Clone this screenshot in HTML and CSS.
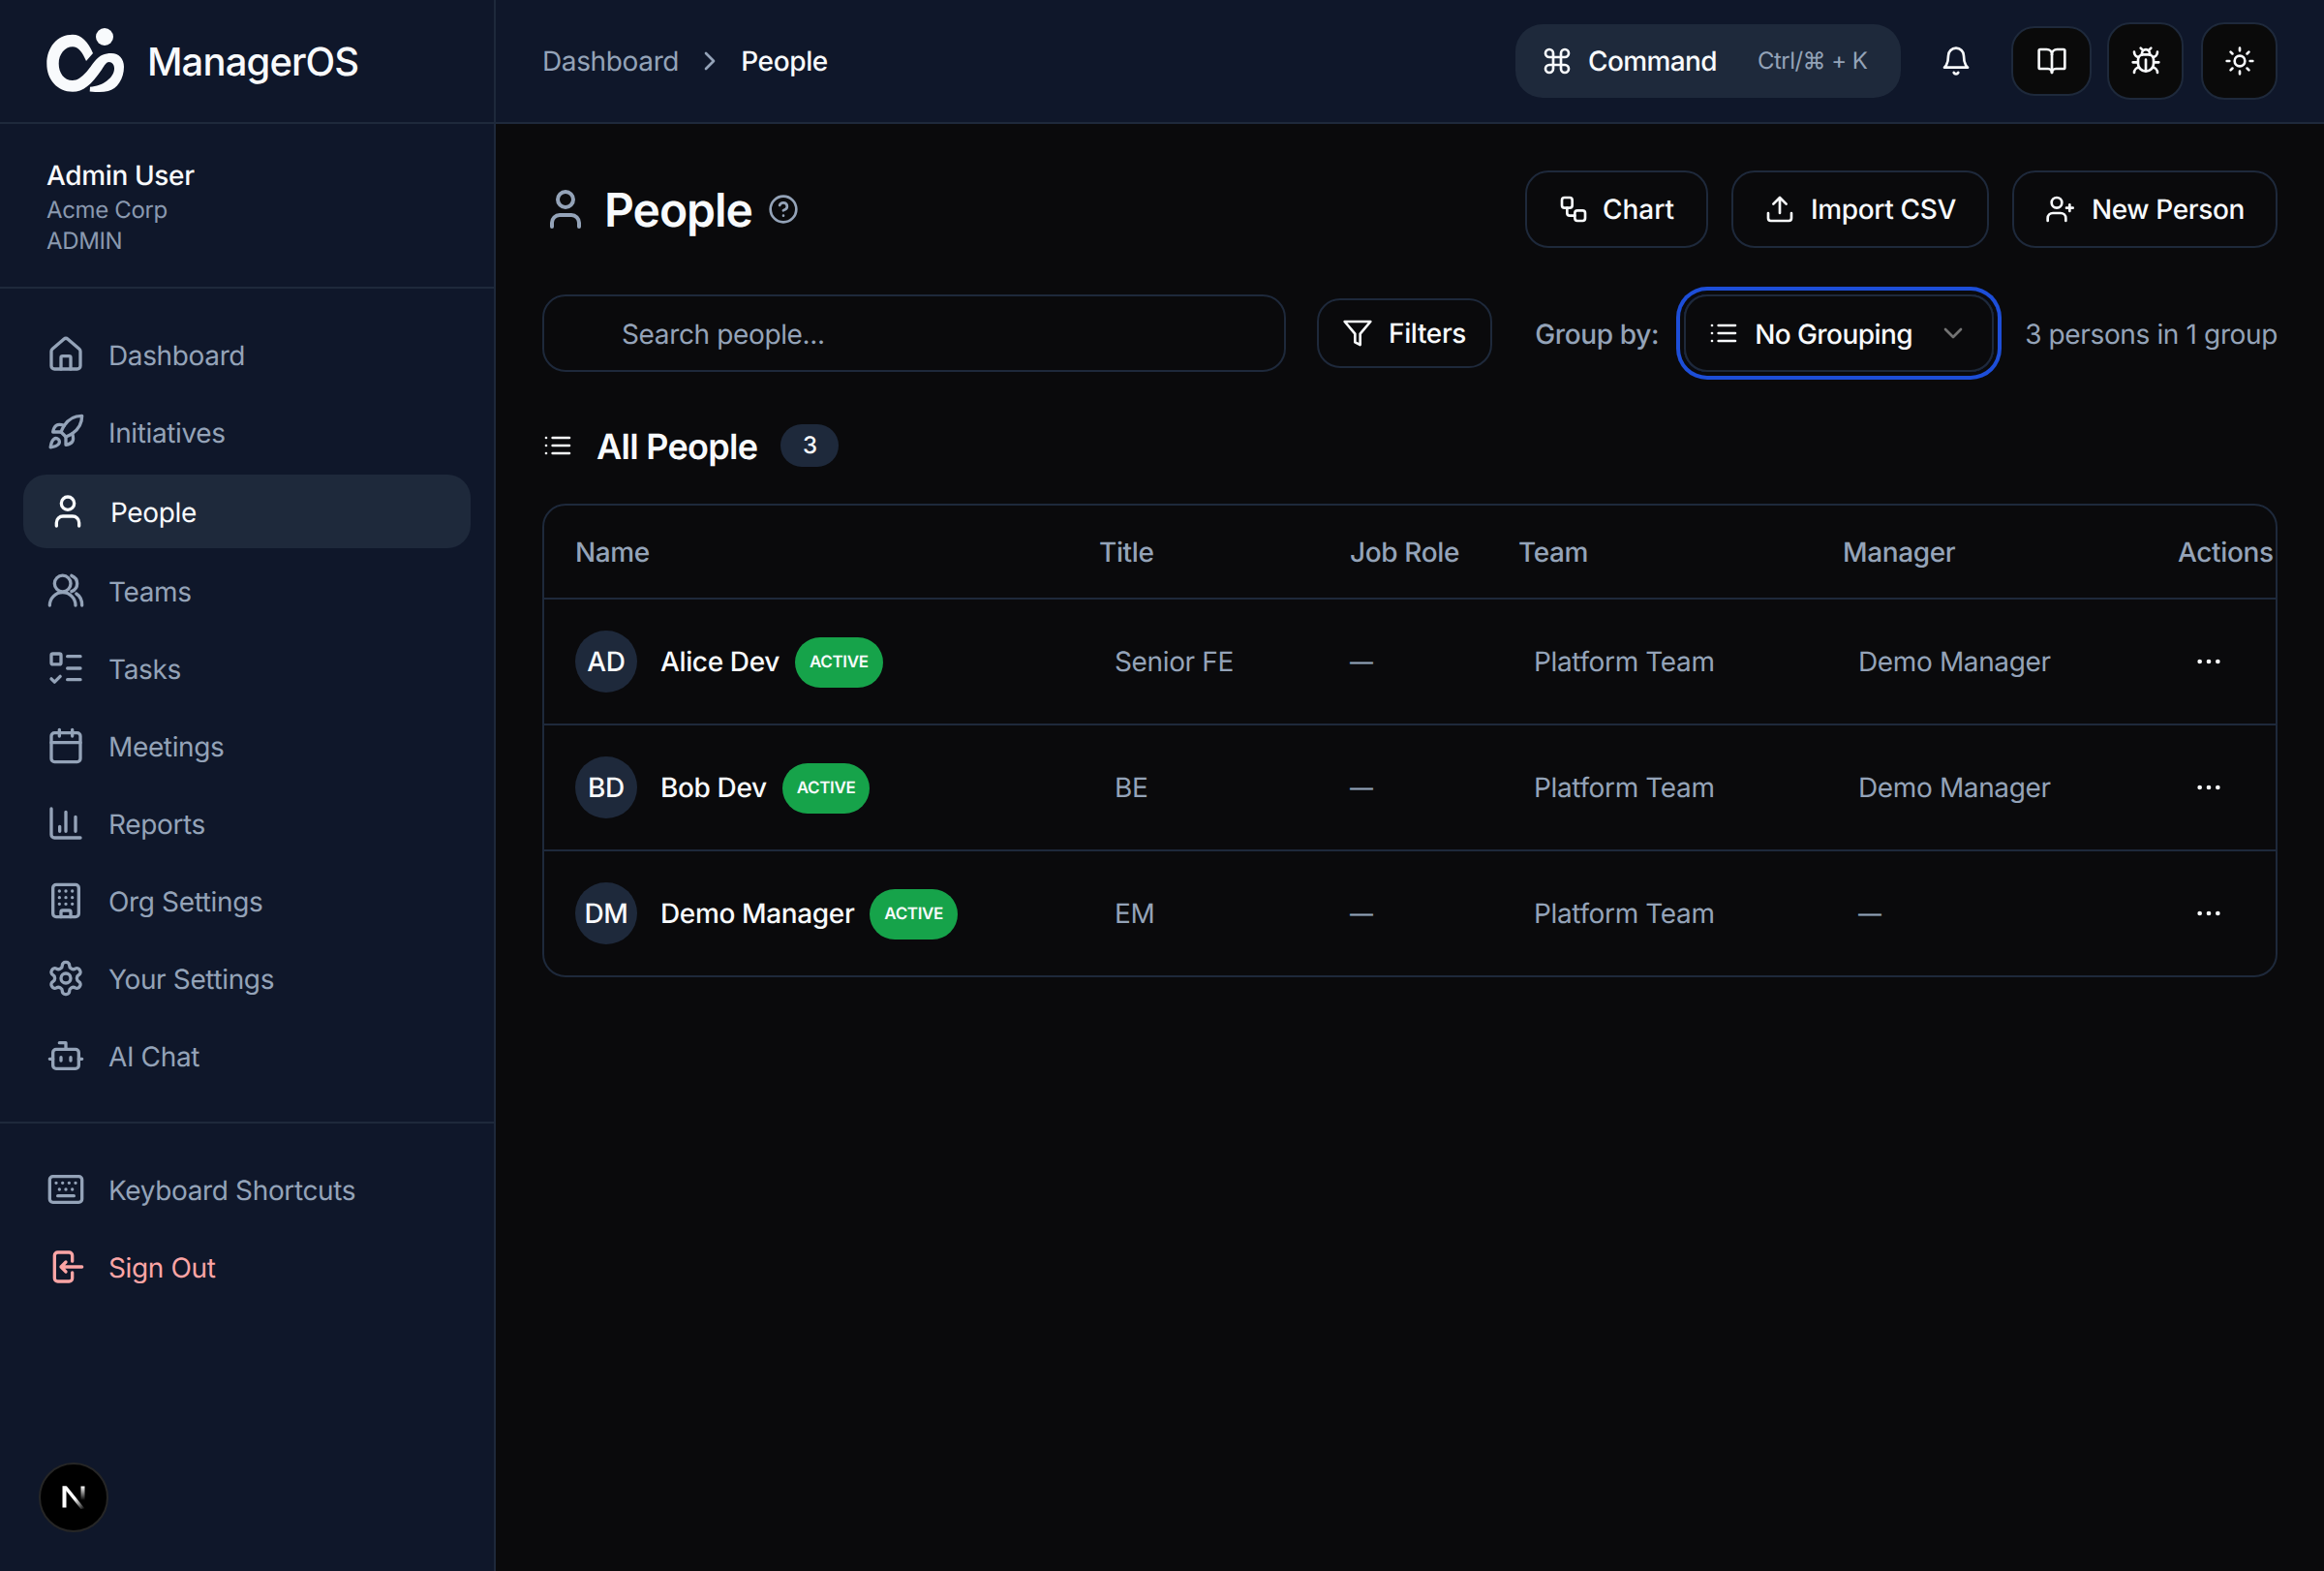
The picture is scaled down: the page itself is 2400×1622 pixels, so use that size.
FILE: index.html
```html
<!DOCTYPE html>
<html lang="en">
<head>
<meta charset="utf-8">
<title>People - ManagerOS</title>
<link rel="stylesheet" href="styles.css">
</head>
<body>
<svg class="sprite" aria-hidden="true">
  <symbol id="i-home" viewBox="0 0 24 24"><path d="M15 21v-7a1 1 0 0 0-1-1h-4a1 1 0 0 0-1 1v7"/><path d="M3 10a2 2 0 0 1 .7-1.5l7-6a2 2 0 0 1 2.6 0l7 6A2 2 0 0 1 21 10v9a2 2 0 0 1-2 2H5a2 2 0 0 1-2-2z"/></symbol>
  <symbol id="i-rocket" viewBox="0 0 24 24"><path d="M4.5 16.5c-1.5 1.26-2 5-2 5s3.74-.5 5-2c.71-.84.7-2.13-.09-2.91a2.18 2.18 0 0 0-2.91-.09z"/><path d="m12 15-3-3a22 22 0 0 1 2-3.95A12.88 12.88 0 0 1 22 2c0 2.72-.78 7.5-6 11a22.35 22.35 0 0 1-4 2z"/><path d="M9 12H4s.55-3.03 2-4c1.62-1.08 5 0 5 0"/><path d="M12 15v5s3.03-.55 4-2c1.08-1.62 0-5 0-5"/></symbol>
  <symbol id="i-user" viewBox="0 0 24 24"><path d="M19 21v-2a4 4 0 0 0-4-4H9a4 4 0 0 0-4 4v2"/><circle cx="12" cy="7" r="4"/></symbol>
  <symbol id="i-users" viewBox="0 0 24 24"><circle cx="10" cy="7.5" r="5"/><path d="M2 21c0-4.4 3.6-8 8-8s8 3.6 8 8"/><path d="M15.5 2.6c2 .8 3.5 2.7 3.5 4.9s-1.4 4.1-3.5 4.9"/><path d="M18.5 13.8c2.2 1.4 3.5 4 3.5 7.2"/></symbol>
  <symbol id="i-tasks" viewBox="0 0 24 24"><rect x="3" y="3" width="6" height="6.5" rx="1"/><path d="M13 4.6h8M13 12h8M13 19h8"/><path d="m3 18.5 2 2 3.5-3.5"/></symbol>
  <symbol id="i-calendar" viewBox="0 0 24 24"><path d="M8 2v4M16 2v4"/><rect x="3" y="4" width="18" height="18" rx="2"/><path d="M3 10h18"/></symbol>
  <symbol id="i-chart" viewBox="0 0 24 24"><path d="M3 3v16a2 2 0 0 0 2 2h16"/><path d="M8.2 17v-3M12 17V5M18 17V8"/></symbol>
  <symbol id="i-building" viewBox="0 0 24 24"><rect x="4" y="2" width="16" height="20" rx="2"/><path d="M9 22v-3a1 1 0 0 1 1-1h4a1 1 0 0 1 1 1v3"/><path d="M8 6h.01M12 6h.01M16 6h.01M8 10h.01M12 10h.01M16 10h.01M8 14h.01M12 14h.01M16 14h.01"/></symbol>
  <symbol id="i-gear" viewBox="0 0 24 24"><path d="M12.22 2h-.44a2 2 0 0 0-2 2v.18a2 2 0 0 1-1 1.73l-.43.25a2 2 0 0 1-2 0l-.15-.08a2 2 0 0 0-2.73.73l-.22.38a2 2 0 0 0 .73 2.73l.15.1a2 2 0 0 1 1 1.72v.51a2 2 0 0 1-1 1.74l-.15.09a2 2 0 0 0-.73 2.73l.22.38a2 2 0 0 0 2.73.73l.15-.08a2 2 0 0 1 2 0l.43.25a2 2 0 0 1 1 1.73V20a2 2 0 0 0 2 2h.44a2 2 0 0 0 2-2v-.18a2 2 0 0 1 1-1.73l.43-.25a2 2 0 0 1 2 0l.15.08a2 2 0 0 0 2.73-.73l.22-.39a2 2 0 0 0-.73-2.73l-.15-.08a2 2 0 0 1-1-1.74v-.5a2 2 0 0 1 1-1.74l.15-.09a2 2 0 0 0 .73-2.73l-.22-.38a2 2 0 0 0-2.73-.73l-.15.08a2 2 0 0 1-2 0l-.43-.25a2 2 0 0 1-1-1.73V4a2 2 0 0 0-2-2z"/><circle cx="12" cy="12" r="3"/></symbol>
  <symbol id="i-bot" viewBox="0 0 24 24"><path d="M12 8V4H8"/><rect x="4" y="8" width="16" height="12" rx="2"/><path d="M2 14h2M20 14h2M15 13v2M9 13v2"/></symbol>
  <symbol id="i-keyboard" viewBox="0 0 24 24"><rect x="2" y="4" width="20" height="16" rx="2"/><path d="M6 8h.01M10 8h.01M14 8h.01M18 8h.01M8 12h.01M12 12h.01M16 12h.01M7 16h10"/></symbol>
  <symbol id="i-signout" viewBox="0 0 24 24"><path d="M16 8.5V5a2 2 0 0 0-2-2H7a2 2 0 0 0-2 2v14a2 2 0 0 0 2 2h7a2 2 0 0 0 2-2v-3.5"/><path d="M22 12H9M12 9l-3 3 3 3"/></symbol>
  <symbol id="i-chev-right" viewBox="0 0 24 24"><path d="m9 18 6-6-6-6"/></symbol>
  <symbol id="i-chev-down" viewBox="0 0 24 24"><path d="m6 9 6 6 6-6"/></symbol>
  <symbol id="i-command" viewBox="0 0 24 24"><path d="M15 6v12a3 3 0 1 0 3-3H6a3 3 0 1 0 3 3V6a3 3 0 1 0-3 3h12a3 3 0 1 0-3-3"/></symbol>
  <symbol id="i-bell" viewBox="0 0 24 24"><path d="M6 8a6 6 0 0 1 12 0c0 7 3 9 3 9H3s3-2 3-9"/><path d="M10.3 21a1.94 1.94 0 0 0 3.4 0"/></symbol>
  <symbol id="i-book" viewBox="0 0 24 24"><path d="M12 7v14"/><path d="M3 18a1 1 0 0 1-1-1V4a1 1 0 0 1 1-1h5a4 4 0 0 1 4 4 4 4 0 0 1 4-4h5a1 1 0 0 1 1 1v13a1 1 0 0 1-1 1h-6a3 3 0 0 0-3 3 3 3 0 0 0-3-3z"/></symbol>
  <symbol id="i-bug" viewBox="0 0 24 24"><path d="m8 2 1.88 1.88M14.12 3.88 16 2M9 7.13v-1a3 3 0 1 1 6 0v1"/><path d="M12 20c-3.3 0-6-2.7-6-6v-3a4 4 0 0 1 4-4h4a4 4 0 0 1 4 4v3c0 3.3-2.7 6-6 6M12 20v-9M6.53 9C4.6 8.8 3 7.1 3 5M6 13H2M3 21c0-2.1 1.7-3.9 3.8-4M20.97 5c0 2.1-1.6 3.8-3.5 4M22 13h-4M17.2 17c2.1.1 3.8 1.9 3.8 4"/></symbol>
  <symbol id="i-sun" viewBox="0 0 24 24"><circle cx="12" cy="12" r="4"/><path d="M12 2v2M12 20v2M4.93 4.93l1.41 1.41M17.66 17.66l1.41 1.41M2 12h2M20 12h2M6.34 17.66l-1.41 1.41M19.07 4.93l-1.41 1.41"/></symbol>
  <symbol id="i-help" viewBox="0 0 24 24"><circle cx="12" cy="12" r="10"/><path d="M9.09 9a3 3 0 0 1 5.83 1c0 2-3 3-3 3M12 17h.01"/></symbol>
  <symbol id="i-workflow" viewBox="0 0 24 24"><rect x="3" y="3" width="8" height="8" rx="2"/><path d="M7 11v4a2 2 0 0 0 2 2h4"/><rect x="13" y="13" width="8" height="8" rx="2"/></symbol>
  <symbol id="i-upload" viewBox="0 0 24 24"><path d="M21 15v4a2 2 0 0 1-2 2H5a2 2 0 0 1-2-2v-4M17 8l-5-5-5 5M12 3v12"/></symbol>
  <symbol id="i-userplus" viewBox="0 0 24 24"><path d="M16 21v-2a4 4 0 0 0-4-4H6a4 4 0 0 0-4 4v2"/><circle cx="9" cy="7" r="4"/><path d="M19 8.500v5M21.500 11h-5"/></symbol>
  <symbol id="i-filter" viewBox="0 0 24 24"><path d="M22 3H2l8 9.46V19l4 2v-8.54z"/></symbol>
  <symbol id="i-list" viewBox="0 0 24 24"><path d="M3 12h.01M3 18h.01M3 6h.01M8 12h13M8 18h13M8 6h13"/></symbol>
  <symbol id="i-dots" viewBox="0 0 24 24"><path d="M5 12h.01M12 12h.01M19 12h.01"/></symbol>
</svg>

<div class="app">
  <aside class="sidebar">
    <div class="brand">
      <svg class="logo" viewBox="0 0 80 66">
        <path class="logo-fill" d="M48 26C43 14 36 6.700 27 6.700 11 6.700 .3 20 .3 36.700 .3 53 11 65.700 27 65.700 38 65.700 46 59 57 43 60 38 62 35 64.500 35 68 35 70 38 70 41.700 70 51 58 60 45 60.700L44.700 65.500C52 66.500 58 66 63.700 65 73 63 80 52 80 40 80 32 75 26 67 26 60 26 55 28 50 34 45 40 37 54 27 54 18 54 12.700 46 12.700 36.700 12.700 27 19 19.300 27 19.300 33 19.300 37 25 41 34Z"/>
        <circle class="logo-fill" cx="60" cy="9" r="9"/>
      </svg>
      <span class="brand-name">ManagerOS</span>
    </div>
    <div class="user-box">
      <div class="user-name">Admin User</div>
      <div class="user-meta">Acme Corp</div>
      <div class="user-meta">ADMIN</div>
    </div>
    <nav class="nav nav-main">
      <a class="nav-item"><svg class="ic ic-40"><use href="#i-home"/></svg><span>Dashboard</span></a>
      <a class="nav-item"><svg class="ic ic-40"><use href="#i-rocket"/></svg><span>Initiatives</span></a>
      <a class="nav-item is-active"><svg class="ic ic-40"><use href="#i-user"/></svg><span>People</span></a>
      <a class="nav-item"><svg class="ic ic-40"><use href="#i-users"/></svg><span>Teams</span></a>
      <a class="nav-item"><svg class="ic ic-40"><use href="#i-tasks"/></svg><span>Tasks</span></a>
      <a class="nav-item"><svg class="ic ic-40"><use href="#i-calendar"/></svg><span>Meetings</span></a>
      <a class="nav-item"><svg class="ic ic-40"><use href="#i-chart"/></svg><span>Reports</span></a>
      <a class="nav-item"><svg class="ic ic-40"><use href="#i-building"/></svg><span>Org Settings</span></a>
      <a class="nav-item"><svg class="ic ic-40"><use href="#i-gear"/></svg><span>Your Settings</span></a>
      <a class="nav-item"><svg class="ic ic-40"><use href="#i-bot"/></svg><span>AI Chat</span></a>
    </nav>
    <nav class="nav">
      <a class="nav-item"><svg class="ic ic-40"><use href="#i-keyboard"/></svg><span>Keyboard Shortcuts</span></a>
      <a class="nav-item is-danger"><svg class="ic ic-40"><use href="#i-signout"/></svg><span>Sign Out</span></a>
    </nav>
  </aside>

  <div class="main">
    <header class="topbar">
      <div class="crumbs">
        <span class="crumb">Dashboard</span>
        <svg class="ic ic-32 crumb-sep"><use href="#i-chev-right"/></svg>
        <span class="crumb-current">People</span>
      </div>
      <div class="top-actions">
        <button class="command"><svg class="ic ic-32"><use href="#i-command"/></svg><span class="command-label">Command</span><span class="command-kbd">Ctrl/⌘ + K</span></button>
        <button class="bell"><svg class="ic ic-32"><use href="#i-bell"/></svg></button>
        <button class="square square-book"><svg class="ic ic-32"><use href="#i-book"/></svg></button>
        <button class="square"><svg class="ic ic-32"><use href="#i-bug"/></svg></button>
        <button class="square"><svg class="ic ic-32"><use href="#i-sun"/></svg></button>
      </div>
    </header>

    <main class="content">
      <div class="title-row">
        <div class="title-left">
          <svg class="ic ic-48 title-icon"><use href="#i-user"/></svg>
          <h1 class="title">People</h1>
          <svg class="ic ic-32 help"><use href="#i-help"/></svg>
        </div>
        <div class="title-actions">
          <button class="btn btn-chart"><svg class="ic ic-32"><use href="#i-workflow"/></svg>Chart</button>
          <button class="btn"><svg class="ic ic-32"><use href="#i-upload"/></svg>Import CSV</button>
          <button class="btn"><svg class="ic ic-32"><use href="#i-userplus"/></svg>New Person</button>
        </div>
      </div>

      <div class="filter-row">
        <div class="filter-left">
          <input class="search" type="text" placeholder="Search people...">
          <button class="btn btn-filter"><svg class="ic ic-32"><use href="#i-filter"/></svg>Filters</button>
        </div>
        <div class="filter-right">
          <span class="group-label">Group by:</span>
          <button class="select"><svg class="ic ic-32"><use href="#i-list"/></svg><span class="select-value">No Grouping</span><svg class="ic ic-32 select-chev"><use href="#i-chev-down"/></svg></button>
          <span class="group-count">3 persons in 1 group</span>
        </div>
      </div>

      <div class="group-head">
        <svg class="ic ic-32"><use href="#i-list"/></svg>
        <h2 class="group-title">All People</h2>
        <span class="count">3</span>
      </div>

      <div class="table-wrap">
        <table class="table">
          <thead>
            <tr><th class="col-name">Name</th><th class="col-title">Title</th><th class="col-role">Job Role</th><th class="col-team">Team</th><th class="col-mgr">Manager</th><th class="col-act">Actions</th></tr>
          </thead>
          <tbody>
            <tr>
              <td><div class="person"><span class="avatar">AD</span><span class="person-name">Alice Dev</span><span class="badge">ACTIVE</span></div></td>
              <td><span class="pad">Senior FE</span></td><td><span class="dash">—</span></td><td><span class="pad">Platform Team</span></td><td><span class="pad">Demo Manager</span></td>
              <td><svg class="ic ic-32 dots"><use href="#i-dots"/></svg></td>
            </tr>
            <tr>
              <td><div class="person"><span class="avatar">BD</span><span class="person-name">Bob Dev</span><span class="badge">ACTIVE</span></div></td>
              <td><span class="pad">BE</span></td><td><span class="dash">—</span></td><td><span class="pad">Platform Team</span></td><td><span class="pad">Demo Manager</span></td>
              <td><svg class="ic ic-32 dots"><use href="#i-dots"/></svg></td>
            </tr>
            <tr>
              <td><div class="person"><span class="avatar">DM</span><span class="person-name">Demo Manager</span><span class="badge">ACTIVE</span></div></td>
              <td><span class="pad">EM</span></td><td><span class="dash">—</span></td><td><span class="pad">Platform Team</span></td><td><span class="pad dash">—</span></td>
              <td><svg class="ic ic-32 dots"><use href="#i-dots"/></svg></td>
            </tr>
          </tbody>
        </table>
      </div>
    </main>
  </div>
</div>

<div class="next-badge">
  <svg class="next-n" viewBox="0 0 24 24">
    <defs>
      <linearGradient id="n-diag" x1="0" y1="0" x2="1" y2="1"><stop offset="0.55" stop-color="#fff"/><stop offset="1" stop-color="#fff" stop-opacity="0"/></linearGradient>
      <linearGradient id="n-right" x1="0" y1="0" x2="0" y2="1"><stop offset="0" stop-color="#fff"/><stop offset="0.8" stop-color="#fff" stop-opacity="0"/></linearGradient>
    </defs>
    <rect x="0.500" y="0.500" width="4" height="22" fill="#fff"/>
    <polygon points="0.500,0.500 5,0.500 23.500,23.500 19.500,24" fill="url(#n-diag)"/>
    <rect x="19.500" y="0.500" width="4" height="18" fill="url(#n-right)"/>
  </svg>
</div>
</body>
</html>
```

FILE: styles.css
```css
* { box-sizing: border-box; }
html, body { margin: 0; height: 100%; }
body {
  background: #0a0a0c;
  color: #f8fafc;
  font-family: "Inter", "Liberation Sans", sans-serif;
  font-size: 28px;
  line-height: 40px;
  letter-spacing: -0.013em;
  overflow: hidden;
  text-rendering: geometricPrecision;
}
button, input { font: inherit; color: inherit; letter-spacing: inherit; text-rendering: inherit; }
.sprite { display: none; }
.ic {
  flex: none;
  display: block;
  fill: none;
  stroke: currentColor;
  stroke-width: 2;
  stroke-linecap: round;
  stroke-linejoin: round;
}
.ic-32 { width: 32px; height: 32px; }
.ic-40 { width: 40px; height: 40px; }
.ic-48 { width: 48px; height: 48px; }

.app { display: flex; height: 1622px; }

/* sidebar */
.sidebar {
  width: 512px;
  flex: none;
  background: #0f172a;
  border-right: 2px solid #1e293b;
}
.brand {
  height: 128px;
  display: flex;
  align-items: center;
  gap: 24px;
  padding: 0 48px;
  border-bottom: 2px solid #1e293b;
}
.logo { width: 80px; height: 66px; flex: none; margin-top: -2px; }
.logo-fill { fill: #f8fafc; }
.brand-name { font-size: 40px; font-weight: 500; line-height: 48px; letter-spacing: -0.022em; padding-top: 2px; }
.user-box {
  padding: 33px 48px 0;
  height: 170px;
  border-bottom: 2px solid #1e293b;
}
.user-name { font-weight: 500; line-height: 40px; }
.user-meta { font-size: 24px; line-height: 32px; color: #8a99af; }
.nav {
  display: flex;
  flex-direction: column;
  gap: 8px;
  padding: 32px 24px;
}
.nav-main { border-bottom: 2px solid #1e293b; }
.nav-item {
  display: flex;
  align-items: center;
  gap: 24px;
  height: 72px;
  padding: 0 24px;
  color: #94a3b8;
  border-radius: 24px;
}
.nav-item span { padding-top: 2px; }
.nav-item.is-active {
  height: 76px;
  padding: 0 26px;
  background: #1e293b;
  color: #f8fafc;
}
.nav-item.is-danger { color: #fca5a5; }

/* top bar */
.main { flex: 1; min-width: 0; display: flex; flex-direction: column; }
.topbar {
  height: 128px;
  flex: none;
  display: flex;
  align-items: center;
  justify-content: space-between;
  padding: 0 48px;
  background: #0f172a;
  border-bottom: 2px solid #1e293b;
}
.crumbs { display: flex; align-items: center; gap: 16px; }
.crumb { color: #94a3b8; }
.crumb-sep { color: #94a3b8; }
.crumb-current { font-weight: 500; color: #f8fafc; }
.top-actions { display: flex; align-items: center; }
.command {
  display: flex;
  align-items: center;
  height: 76px;
  width: 398px;
  padding: 0 24px 0 27px;
  border: 0;
  border-radius: 28px;
  background: #1e293b;
  color: #f8fafc;
}
.command-label { margin-left: 16px; font-weight: 450; letter-spacing: -0.022em; }
.command-kbd { margin-left: 42px; font-size: 24px; letter-spacing: -0.022em; color: #94a3b8; }
.bell {
  width: 48px;
  height: 48px;
  margin-left: 33px;
  margin-right: 33px;
  padding: 8px;
  border: 0;
  background: none;
  color: #f8fafc;
}
.square {
  width: 79px;
  height: 80px;
  margin-left: 18px;
  display: flex;
  align-items: center;
  justify-content: center;
  padding: 0;
  border: 2px solid #1e293b;
  border-radius: 24px;
  background: #0a0a0a;
  color: #f8fafc;
}
.square-book { width: 83px; height: 72px; margin-left: 0; }
.square-book + .square { margin-left: 16px; }

/* content */
.content { flex: 1; padding: 48px; }
.title-row { display: flex; justify-content: space-between; align-items: center; height: 80px; }
.title-left { display: flex; align-items: center; gap: 16px; }
.title-icon { color: #94a3b8; }
.title { margin: 0; padding-top: 2px; font-size: 48px; line-height: 64px; font-weight: 600; letter-spacing: -0.022em; }
.help { color: #94a3b8; }
.title-actions { display: flex; gap: 24px; }
.btn {
  display: flex;
  align-items: center;
  gap: 16px;
  height: 80px;
  padding: 0 32px;
  border: 2px solid #1e293b;
  border-radius: 24px;
  background: none;
  color: #f8fafc;
  font-weight: 450;
}
.btn-chart { padding: 0 33px 0 32px; gap: 14px; letter-spacing: 0; }
.filter-row {
  display: flex;
  align-items: center;
  justify-content: space-between;
  margin-top: 48px;
  height: 80px;
}
.filter-left { display: flex; align-items: center; gap: 32px; }
.search {
  width: 768px;
  height: 80px;
  padding: 2px 80px 0;
  border: 2px solid #1e293b;
  border-radius: 24px;
  background: none;
  outline: none;
}
.search::placeholder { color: #94a3b8; opacity: 1; }
.btn-filter { height: 72px; padding: 0 25px 0 24px; }
.filter-right { display: flex; align-items: center; }
.group-label { color: #94a3b8; font-weight: 450; margin-right: 26px; padding-top: 2px; }
.select {
  display: flex;
  align-items: center;
  width: 320px;
  height: 80px;
  padding: 0 24px 0 23px;
  border: 2px solid #1e293b;
  border-radius: 24px;
  background: none;
  color: #f8fafc;
  box-shadow: 0 0 0 4px #0a0a0c, 0 0 0 8px #1d4ed8;
}
.select-value { margin-left: 16px; font-weight: 450; letter-spacing: -0.02em; white-space: nowrap; padding-top: 2px; }
.select-chev { margin-left: auto; color: #737373; }
.group-count { margin-left: 32px; color: #94a3b8; padding-top: 2px; }

.group-head {
  display: flex;
  align-items: center;
  height: 44px;
  margin-top: 54px;
  gap: 24px;
}
.group-title { margin: 0; padding-top: 2px; font-size: 36px; line-height: 44px; font-weight: 600; letter-spacing: -0.02em; }
.count {
  display: flex;
  align-items: center;
  justify-content: center;
  width: 60px;
  height: 44px;
  border-radius: 22px;
  background: #1e293b;
  font-size: 24px;
  font-weight: 500;
}

.table-wrap {
  margin-top: 38px;
  border: 2px solid #1e293b;
  border-radius: 24px;
}
.table {
  width: 100%;
  table-layout: fixed;
  border-collapse: separate;
  border-spacing: 0;
}
.table th, .table td {
  padding: 0 32px;
  border-bottom: 2px solid #1e293b;
  text-align: left;
  white-space: nowrap;
}
.table th { height: 97px; font-weight: 450; color: #94a3b8; }
.table td { height: 130px; color: #94a3b8; }
.table tbody tr:last-child td { height: 128px; border-bottom: 0; }
.col-name { width: 541px; }
.col-title { width: 259px; }
.col-role { width: 174px; }
.col-team { width: 335px; }
.col-mgr { width: 346px; }
.col-act { width: 133px; }
.pad { padding-left: 16px; }
.dash { font-size: 24px; }
.person { display: flex; align-items: center; }
.avatar {
  display: flex;
  align-items: center;
  justify-content: center;
  width: 64px;
  height: 64px;
  flex: none;
  border-radius: 50%;
  background: #1e293b;
  color: #f8fafc;
  font-weight: 450;
}
.person-name { margin-left: 24px; color: #f8fafc; font-weight: 450; }
.badge {
  display: flex;
  align-items: center;
  height: 52px;
  margin-top: 1px;
  margin-left: 16px;
  padding: 0 15px;
  border-radius: 26px;
  background: #16a34a;
  color: #f8fafc;
  font-size: 17px;
  font-weight: 600;
}
.dots { margin-left: 16px; color: #f8fafc; stroke-width: 3.5; }

.next-badge {
  position: absolute;
  left: 40px;
  top: 1510px;
  width: 72px;
  height: 72px;
  display: flex;
  align-items: center;
  justify-content: center;
  border-radius: 50%;
  background: #000;
  border: 2px solid #262626;
}
.next-n { width: 24px; height: 24px; display: block; }
```
